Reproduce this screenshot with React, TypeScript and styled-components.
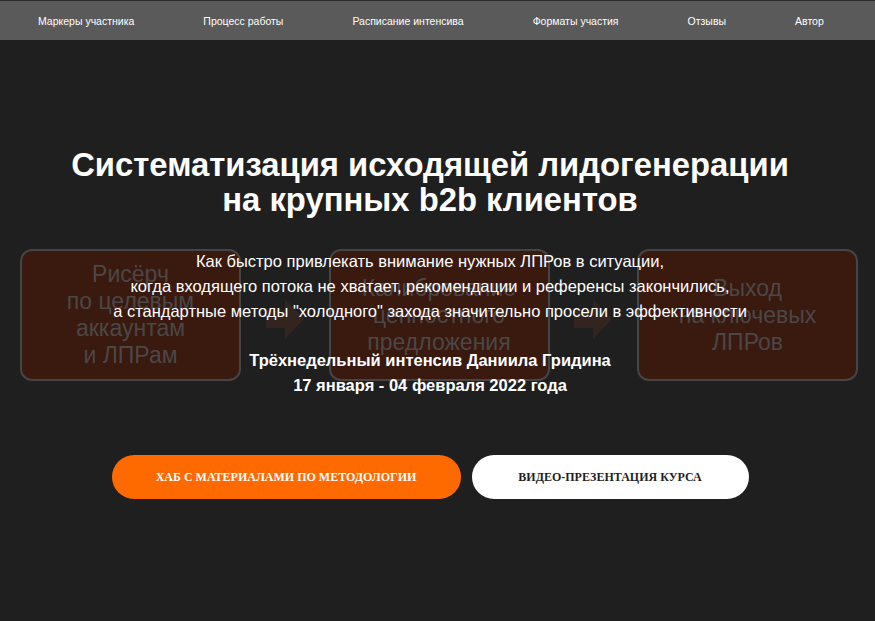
import React from 'react';
import styled, { createGlobalStyle } from 'styled-components';

const GlobalStyle = createGlobalStyle`
  html, body {
    margin: 0;
    padding: 0;
    background: #1f1f1f;
  }
  body {
    font-family: "Liberation Sans", Arial, sans-serif;
    min-height: 621px;
  }
`;

const Page = styled.div`
  min-height: 621px;
  background: #1f1f1f;
  color: #fff;
  overflow: hidden;
`;

const NavBar = styled.nav`
  height: 40px;
  background: #5a5a5a;
  border-top: 1px solid #2a2a2a;
  box-sizing: border-box;
  display: flex;
  align-items: center;
  gap: 69px;
  padding-left: 38px;
`;

const NavLink = styled.a`
  color: #fff;
  font-size: 10.5px;
  text-decoration: none;
  white-space: nowrap;
`;

const Hero = styled.section`
  display: grid;
`;

// faded three-step scheme sitting behind the headline
const Diagram = styled.div`
  grid-area: 1 / 1;
  align-self: start;
  margin-top: 209px;
  display: flex;
  align-items: center;
  justify-content: space-between;
  padding: 0 17px 0 20px;
`;

const StepBox = styled.div`
  width: 221px;
  height: 132px;
  box-sizing: border-box;
  border: 2px solid #454545;
  border-radius: 12px;
  background: #3a190f;
  color: #4b4747;
  font-size: 23px;
  line-height: 27px;
  text-align: center;
  display: flex;
  align-items: center;
  justify-content: center;
`;

const ArrowWrap = styled.div`
  display: flex;
  margin-top: 8px;
`;

const Content = styled.div`
  grid-area: 1 / 1;
  position: relative;
  display: flex;
  flex-direction: column;
  align-items: center;
  padding: 107px 15px 0 0;
  text-align: center;
`;

const Title = styled.h1`
  margin: 0;
  font-size: 32.8px;
  line-height: 35px;
  font-weight: 700;
`;

const Lead = styled.p`
  margin: 32px 0 0;
  font-size: 16.5px;
  line-height: 25px;
`;

const Dates = styled.p`
  margin: 24px 0 0;
  font-size: 16.5px;
  line-height: 25px;
  font-weight: 700;
`;

const Actions = styled.div`
  display: flex;
  gap: 11px;
  margin-top: 57px;
`;

const PillButton = styled.a<{ $variant: 'accent' | 'light' }>`
  height: 44px;
  border-radius: 22px;
  display: flex;
  align-items: center;
  justify-content: center;
  font-family: "Liberation Serif", "Times New Roman", serif;
  font-weight: 700;
  font-size: 12px;
  text-transform: uppercase;
  text-decoration: none;
  width: ${(p) => (p.$variant === 'accent' ? '349px' : '277px')};
  background: ${(p) => (p.$variant === 'accent' ? '#ff6a00' : '#ffffff')};
  color: ${(p) => (p.$variant === 'accent' ? '#ffffff' : '#1f1f1f')};
`;

const Arrow = () => (
  <ArrowWrap>
    <svg width="38" height="40" viewBox="0 0 38 40">
      <polygon points="0,11 19,11 19,0 38,20 19,40 19,29 0,29" fill="#34241f" />
    </svg>
  </ArrowWrap>
);

const navItems = [
  'Маркеры участника',
  'Процесс работы',
  'Расписание интенсива',
  'Форматы участия',
  'Отзывы',
  'Автор',
];

const App: React.FC = () => (
  <Page>
    <GlobalStyle />
    <NavBar>
      {navItems.map((item) => (
        <NavLink key={item} href="#">
          {item}
        </NavLink>
      ))}
    </NavBar>
    <Hero>
      <Diagram>
        <StepBox>
          Рисёрч
          <br />
          по целевым
          <br />
          аккаунтам
          <br />и ЛПРам
        </StepBox>
        <Arrow />
        <StepBox>
          Калибрование
          <br />
          ценностного
          <br />
          предложения
        </StepBox>
        <Arrow />
        <StepBox>
          Выход
          <br />
          на ключевых
          <br />
          ЛПРов
        </StepBox>
      </Diagram>
      <Content>
        <Title>
          Систематизация исходящей лидогенерации
          <br />
          на крупных b2b клиентов
        </Title>
        <Lead>
          Как быстро привлекать внимание нужных ЛПРов в ситуации,
          <br />
          когда входящего потока не хватает, рекомендации и референсы закончились,
          <br />
          а стандартные методы "холодного" захода значительно просели в эффективности
        </Lead>
        <Dates>
          Трёхнедельный интенсив Даниила Гридина
          <br />
          17 января - 04 февраля 2022 года
        </Dates>
        <Actions>
          <PillButton $variant="accent" href="#">
            Хаб с материалами по методологии
          </PillButton>
          <PillButton $variant="light" href="#">
            Видео-презентация курса
          </PillButton>
        </Actions>
      </Content>
    </Hero>
  </Page>
);

export default App;
